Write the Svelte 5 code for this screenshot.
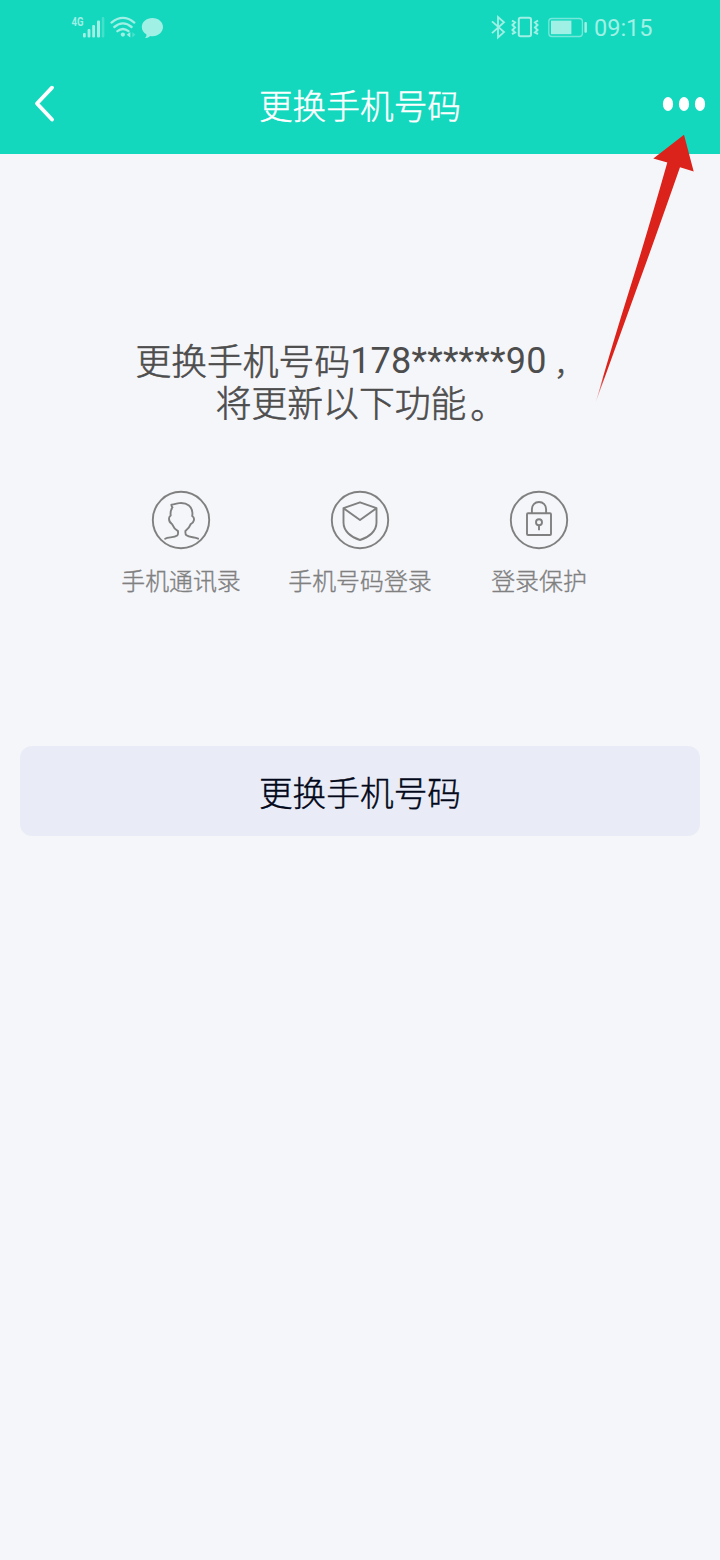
<script>
  const features = [
    { icon: 'person', label: '手机通讯录' },
    { icon: 'shield', label: '手机号码登录' },
    { icon: 'lock', label: '登录保护' }
  ];
</script>

<div class="screen">
  <header>
    <div class="status">
      <svg class="left" width="120" height="40" viewBox="60 8 120 40" fill="none">
        <text x="71.5" y="26.3" class="net" textLength="12" lengthAdjust="spacingAndGlyphs">4G</text>
        <g fill="#a0f0e5">
          <rect x="83" y="33" width="2.8" height="4.4" rx="1" />
          <rect x="87.6" y="29" width="2.8" height="8.4" rx="1" />
          <rect x="92.2" y="25" width="2.8" height="12.4" rx="1" />
          <rect x="97" y="20.4" width="3" height="17" rx="1" />
          <rect x="101.8" y="17" width="2.5" height="20.4" rx="1" opacity=".35" />
        </g>
        <g stroke="#a0f0e5" stroke-width="2.3" stroke-linecap="round">
          <path d="M111.5 22.6Q123 13.2 134.3 22.6" />
          <path d="M114.3 27Q123 19.7 131.6 27" />
          <path d="M117.4 31.2Q123 26.7 128.5 31.2" />
        </g>
        <circle cx="122.9" cy="34.6" r="2.1" fill="#a0f0e5" />
        <path d="M130.3 32v5.4l-3.6-2.7z" fill="#a0f0e5" />
        <path d="M132.3 32v5.4l3-2.7z" fill="#a0f0e5" opacity=".4" />
        <path d="M152.4 18c6.1 0 10.6 4.1 10.6 9.1s-4.5 9.2-10.4 9.2c-1 0-1.700-.1-2.600-.3-1.300 1.400-2.800 2.100-5 2.100 1-1 1.600-2.300 1.500-3.600-2.900-1.600-4.700-4.300-4.700-7.400 0-5 4.500-9.100 10.600-9.100z" fill="#a0f0e5" />
      </svg>
      <div class="right">
        <svg width="108" height="40" viewBox="480 8 108 40" fill="none" stroke="#a0f0e5">
          <path d="M492 21.300l12 10.800-6 5.300V17l6 5.200-12 10.900" stroke-width="1.800" />
          <rect x="518.800" y="17.700" width="12.200" height="18.600" rx="1.800" stroke-width="2" />
          <path d="M512 20.500l3 2-2.500 2.500 2.500 2.500-2.500 2.500 2.500 2.500-3 1.500M538 20.500l-3 2 2.500 2.500-2.500 2.500 2.500 2.500-2.500 2.500 3 1.500" stroke-width="2" />
          <rect x="548.800" y="18.500" width="33.600" height="18" rx="3" stroke-width="1.300" opacity=".7" />
          <rect x="551" y="20.600" width="20.400" height="13.600" fill="#a0f0e5" stroke="none" />
          <rect x="584.400" y="22" width="2.500" height="10.800" rx="1" fill="#a0f0e5" stroke="none" />
        </svg>
        <span class="time">09:15</span>
      </div>
    </div>
    <nav>
      <svg class="back" width="26" height="42" viewBox="31 83 26 42" fill="none">
        <path d="M52 87.700L37 103.500l15 16" stroke="#fff" stroke-width="3.900" stroke-linecap="round" stroke-linejoin="round" />
      </svg>
      <h1>更换手机号码</h1>
      <svg class="more" width="44" height="16" viewBox="662 96 44 16" fill="#fff">
        <ellipse cx="668" cy="104" rx="5.100" ry="6.900" />
        <ellipse cx="684" cy="104" rx="5.100" ry="6.900" />
        <ellipse cx="700" cy="104" rx="5.100" ry="6.900" />
      </svg>
    </nav>
  </header>

  <main>
    <div class="message">
      <p>更换手机号码<span class="digits">178******90</span><span class="comma">，</span></p>
      <p>将更新以下功能<span class="stop">。</span></p>
    </div>
    <ul>
      {#each features as item}
        <li>
          <svg width="60" height="60" viewBox="0 0 60 60" fill="none" stroke="#808080" stroke-width="1.900" stroke-linejoin="round">
            <circle cx="30" cy="30" r="28.200" />
            {#if item.icon === 'person'}
              <path stroke-linecap="round" d="M14.200 48.700c3-1.800 8.800-.8 12-3.200 1.300-1 .8-2.800.8-4.400-3-1.800-4.800-4.300-5.800-6.800-2-1.200-3.200-3.200-3.200-5.500 0-1.500.7-2.600 1.700-3.300-.5-3 .3-5.900 1.800-8.200-.8-.8-1.200-1.800-1.100-2.700 2.700.2 4.600-1.200 8.100-1.500 8.300-.6 12.500 3.700 12.900 9.700.1 1.400 0 2.200-.2 3.200 1.500 1 2.100 2.500 1.700 4.200-.4 1.800-1.700 3.200-3.200 3.900-.9 2.600-2.700 4.900-5.300 7 0 1.500-.3 3.200 1 4.200 3.100 2.300 8 1.600 11.700 3.400" />
            {:else if item.icon === 'shield'}
              <path d="M30 12.300l16.500 5.900v14.300C46.500 41 39 47.500 30 50c-9-2.500-16.500-9-16.500-17.500V18.200zM13.500 18.200L30 30l16.500-11.800" />
            {:else}
              <rect x="18" y="23.300" width="24" height="21.700" rx="1" />
              <path d="M22.900 23.300v-4.100c0-4 2.800-7.200 7.100-7.200s7.100 3.200 7.100 7.200v4.100M30 35.200v5" />
              <circle cx="30" cy="32.200" r="3" />
            {/if}
          </svg>
          <span>{item.label}</span>
        </li>
      {/each}
    </ul>
    <button type="button">更换手机号码</button>
  </main>

  <svg class="arrow" width="110" height="280" viewBox="590 130 110 280">
    <defs>
      <linearGradient id="tail" x1="0" y1="1" x2="0" y2="0">
        <stop offset="0" stop-color="#dc231b" stop-opacity=".15" />
        <stop offset=".1" stop-color="#dc231b" />
      </linearGradient>
    </defs>
    <path d="M684 134.700L693.700 171.500L680 167.300Q656 236 637 288Q619 338 595.500 403Q613 342 630 288Q647 234 667.300 162.600L653.300 158.500Z" fill="url(#tail)" />
  </svg>
</div>

<style>
  :global(body) { margin: 0; background: #f5f6fa; }
  .screen {
    position: relative;
    width: 720px;
    height: 1560px;
    overflow: hidden;
    background: #f5f6fa;
    font-family: Roboto, "Noto Sans CJK SC", sans-serif;
    font-weight: 300;
  }
  header { height: 154px; background: #13d8be; }
  .status {
    display: flex;
    justify-content: space-between;
    height: 54px;
    padding: 8px 68px 0 60px;
    box-sizing: border-box;
  }
  .net { font: 700 12px Roboto, sans-serif; fill: #a0f0e5; }
  .right { display: flex; }
  .time {
    width: 58px;
    margin-left: 6px;
    font-size: 23.500px;
    font-weight: 400;
    line-height: 41px;
    color: #a0f0e5;
    white-space: nowrap;
  }
  nav {
    display: grid;
    grid-template-columns: 100px 1fr 100px;
    align-items: center;
    height: 100px;
  }
  .back { margin-left: 31px; }
  .more { justify-self: end; margin-right: 14px; }
  h1 {
    margin: 7px 0 0;
    font-size: 33.700px;
    font-weight: 300;
    line-height: 48px;
    text-align: center;
    color: #fff;
    -webkit-text-stroke: 0.400px #fff;
  }
  main { display: flex; flex-direction: column; align-items: center; padding: 188px 20px 0; }
  .message {
    font-size: 35.800px;
    line-height: 42px;
    text-align: center;
    color: #4d4d4d;
    -webkit-text-stroke: 0.600px #4d4d4d;
    white-space: nowrap;
  }
  .message p { height: 42px; margin: 0 2px 0 0; }
  .digits {
    display: inline-block;
    font-size: 36px;
    font-weight: 400;
    line-height: 1;
    letter-spacing: 0.200px;
    vertical-align: 2px;
    -webkit-text-stroke: 0 transparent;
  }
  .comma { display: inline-block; width: 36px; font-size: 29px; text-indent: 8px; line-height: 1; vertical-align: -1px; }
  .stop { display: inline-block; width: 36px; text-indent: 4px; line-height: 1; vertical-align: -2px; }
  ul { display: grid; grid-template-columns: repeat(3, 179px); margin: 64px 0 0; padding: 0; list-style: none; }
  li { display: flex; flex-direction: column; align-items: center; }
  li span {
    margin-top: 14px;
    font-size: 23.900px;
    line-height: 36px;
    color: #808080;
    -webkit-text-stroke: 0.350px #808080;
    white-space: nowrap;
  }
  button {
    width: 680px;
    height: 90px;
    margin-top: 146px;
    padding: 8px 0 0;
    border: 0;
    border-radius: 12px;
    background: #e9ecf6;
    color: #03081a;
    font: 300 33.700px/48px Roboto, "Noto Sans CJK SC", sans-serif;
    -webkit-text-stroke: 0.400px #03081a;
  }
  .arrow { position: absolute; left: 590px; top: 130px; }
</style>
